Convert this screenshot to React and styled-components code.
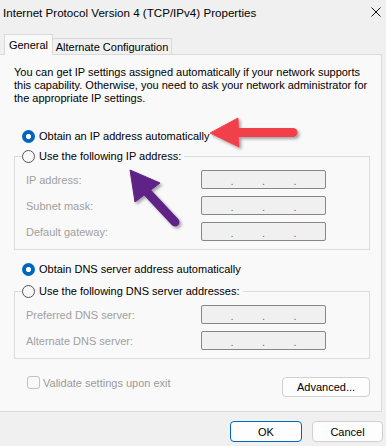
import * as React from "react"
import styled, {createGlobalStyle} from "styled-components"

const GlobalStyle = createGlobalStyle`
	html, body {
		margin: 0;
		padding: 0;
		background: #f0f0f0;
	}
`

const Window = styled.div`
	position: relative;
	width: 386px;
	height: 446px;
	overflow: hidden;
	background: #f0f0f0;
	font-family: "Liberation Sans", Arial, sans-serif;
	font-size: 11px;
	color: #000;
	display: flex;
	flex-direction: column;
`

const TitleBar = styled.div`
	height: 24px;
	display: flex;
	align-items: center;
	justify-content: space-between;
	padding: 0 5px 0 3px;
	font-size: 11.6px;
	color: #000;
`

const Tabs = styled.div`
	display: flex;
	align-items: flex-end;
	margin-top: 11px;
	padding-left: 4px;
	height: 20px;
	position: relative;
	z-index: 1;
	margin-bottom: -1px;
`

const Tab = styled.div`
	width: ${p => p.$width};
	height: ${p => (p.$active ? "21px" : "17px")};
	display: flex;
	align-items: center;
	justify-content: center;
	white-space: nowrap;
	background: ${p => (p.$active ? "#f9f9f9" : "#f0f0f0")};
	border: 1px solid #d9d9d9;
	border-bottom: ${p => (p.$active ? "none" : "1px solid #dadada")};
	margin-left: ${p => (p.$active ? "0" : "-1px")};
	box-sizing: border-box;
`

const Panel = styled.div`
	margin-left: -1px;
	width: 383px;
	height: 358px;
	box-sizing: border-box;
	background: #f9f9f9;
	border: 1px solid #dadada;
	padding: 11px 11px 0 14px;
	display: flex;
	flex-direction: column;
`

const Intro = styled.p`
	margin: 0;
	line-height: 13px;
	color: #000;
`

const RadioRow = styled.label`
	display: flex;
	align-items: center;
	gap: 4px;
	height: 18px;
	padding-left: 8px;
	margin-top: ${p => p.$top || "0px"};
	margin-bottom: ${p => p.$bottom || "4px"};
	color: #000;
`

const RadioMark = styled.span`
	width: 13px;
	height: 13px;
	border-radius: 50%;
	box-sizing: border-box;
	flex: none;
	background: ${p => (p.$checked ? "radial-gradient(circle, #fff 0 2.4px, #0067c0 2.9px)" : "#f8f8f8")};
	border: ${p => (p.$checked ? "none" : "1px solid #555")};
`

const Group = styled.fieldset`
	margin: 0;
	padding: 5px 0 8px 11px;
	border: 1px solid #dcdcdc;
	display: flex;
	flex-direction: column;
	gap: 7px;
	min-width: 0;
`

const Legend = styled.legend`
	padding: 0 3px 0 0;
	margin-left: -4px;
	display: flex;
	align-items: center;
	gap: 4px;
	height: 18px;
	background: #f9f9f9;
`

const FieldRow = styled.div`
	display: grid;
	grid-template-columns: 175px 125px;
	align-items: center;
	height: 19px;
`

const FieldLabel = styled.span`
	color: #a0a0a0;
`

const IpBox = styled.div`
	height: 19px;
	box-sizing: border-box;
	border: 1px solid #868686;
	border-radius: 2px;
	background: #f0f0f0;
	display: flex;
	justify-content: space-evenly;
	align-items: center;
	color: #707088;
	font-size: 11px;
	line-height: 1;
	padding-top: 3px;
`

const Footer = styled.div`
	display: flex;
	justify-content: space-between;
	align-items: flex-start;
	margin-top: 18px;
`

const CheckRow = styled.label`
	display: flex;
	align-items: center;
	gap: 3px;
	margin-left: 13px;
	margin-top: -1px;
	color: #9a9a9a;
`

const CheckBox = styled.span`
	width: 13px;
	height: 13px;
	box-sizing: border-box;
	border: 1px solid #c2c2c2;
	border-radius: 3px;
	background: #f8f8f8;
`

const Button = styled.button`
	font-family: inherit;
	font-size: 11px;
	color: #000;
	width: ${p => p.$width};
	height: ${p => p.$height || "21px"};
	padding: 0;
	background: #fdfdfd;
	border: 1px solid ${p => (p.$primary ? "#0067c0" : "#d0d0d0")};
	border-radius: 4px;
	box-sizing: border-box;
`

const DialogButtons = styled.div`
	display: flex;
	justify-content: flex-end;
	gap: 10px;
	margin-top: 9px;
	padding-right: 3px;
`

const Annotations = styled.svg`
	position: absolute;
	left: 0;
	top: 0;
	pointer-events: none;
`

const Dots = () => (
	<IpBox>
		<span>.</span>
		<span>.</span>
		<span>.</span>
	</IpBox>
)

const Field = ({label}) => (
	<FieldRow>
		<FieldLabel>{label}</FieldLabel>
		<Dots />
	</FieldRow>
)

const App = () => {
	return (
		<Window>
			<GlobalStyle />
			<TitleBar>
				<span>Internet Protocol Version 4 (TCP/IPv4) Properties</span>
				<svg width="10" height="10" viewBox="0 0 10 10">
					<path d="M0.5 0.5 L9.5 9.5 M9.5 0.5 L0.5 9.5" stroke="#111" strokeWidth="1" />
				</svg>
			</TitleBar>
			<Tabs>
				<Tab $active $width="49px">General</Tab>
				<Tab $width="120px">Alternate Configuration</Tab>
			</Tabs>
			<Panel>
				<Intro>
					You can get IP settings assigned automatically if your network supports
					this capability. Otherwise, you need to ask your network administrator
					for the appropriate IP settings.
				</Intro>
				<RadioRow $top="22px" $bottom="2px">
					<RadioMark $checked />
					Obtain an IP address automatically
				</RadioRow>
				<Group>
					<Legend>
						<RadioMark />
						Use the following IP address:
					</Legend>
					<Field label="IP address:" />
					<Field label="Subnet mask:" />
					<Field label="Default gateway:" />
				</Group>
				<RadioRow $top="10px">
					<RadioMark $checked />
					Obtain DNS server address automatically
				</RadioRow>
				<Group>
					<Legend>
						<RadioMark />
						Use the following DNS server addresses:
					</Legend>
					<Field label="Preferred DNS server:" />
					<Field label="Alternate DNS server:" />
				</Group>
				<Footer>
					<CheckRow>
						<CheckBox />
						Validate settings upon exit
					</CheckRow>
					<Button $width="88px" $height="20px">Advanced...</Button>
				</Footer>
			</Panel>
			<DialogButtons>
				<Button $primary $width="72px">OK</Button>
				<Button $width="71px">Cancel</Button>
			</DialogButtons>
			<Annotations width="386" height="446">
				<defs>
					<filter id="shade" x="-20%" y="-20%" width="150%" height="150%">
						<feDropShadow dx="2" dy="2" stdDeviation="1.5" floodColor="#000" floodOpacity="0.35" />
					</filter>
				</defs>
				<g filter="url(#shade)" fill="#f2414b" stroke="#f2414b">
					<polygon points="210,133 238,118 239,147" strokeWidth="1" strokeLinejoin="round" />
					<line x1="236" y1="132.5" x2="293" y2="132.5" strokeWidth="9" strokeLinecap="round" />
				</g>
				<g filter="url(#shade)" fill="#5f2287" stroke="#5f2287">
					<polygon points="130,170 160,183 135,202" strokeWidth="1" strokeLinejoin="round" />
					<line x1="146" y1="191" x2="175" y2="222" strokeWidth="9" strokeLinecap="round" />
				</g>
			</Annotations>
		</Window>
	)
}

export default App
